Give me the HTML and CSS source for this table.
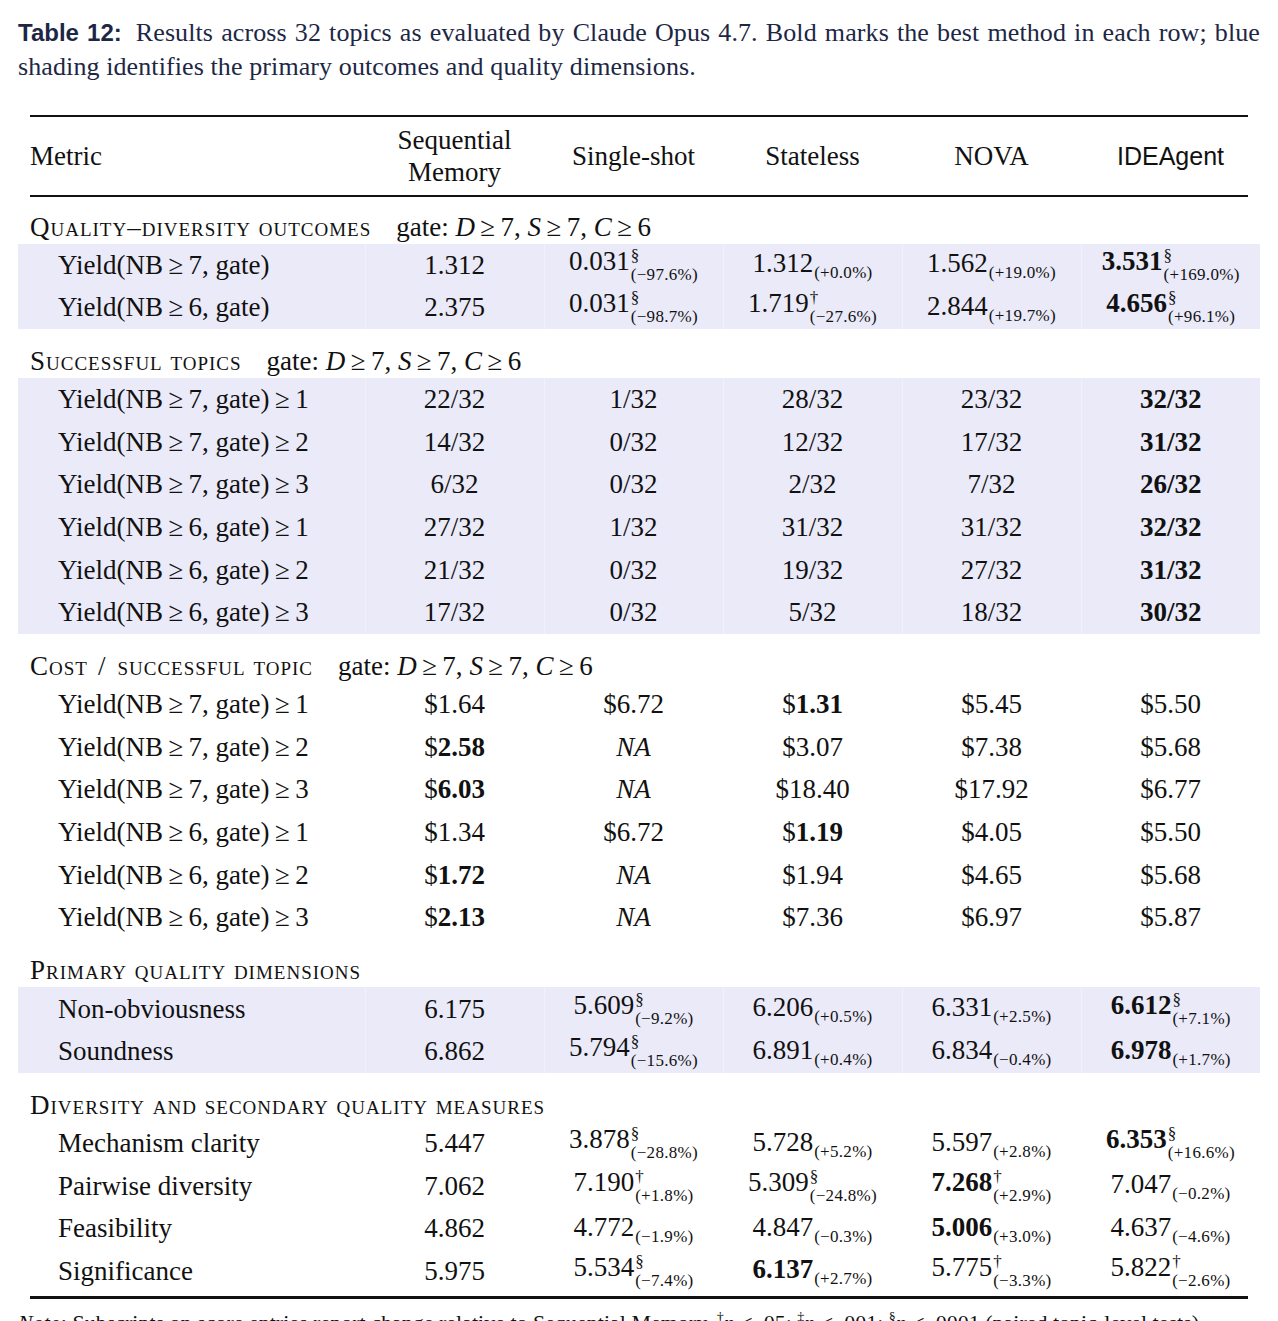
FILE: index.html
```html
<!DOCTYPE html>
<html lang="en">
<head>
  <meta charset="UTF-8" />
  <meta name="viewport" content="width=device-width, initial-scale=1.0"/>
  <title>Table 12 - Results across 32 topics</title>
  <link rel="stylesheet" href="styles.css">
</head>
<body>
  <div class="page">
    <p class="caption"><span class="cap-label">Table 12:</span> Results across 32 topics as evaluated by Claude Opus 4.7. Bold marks the best method in each row; blue shading identifies the primary outcomes and quality dimensions.</p>

    <table class="results">
      <colgroup>
        <col class="c-metric"><col><col><col><col><col>
      </colgroup>
      <thead>
        <tr class="rule"><td colspan="6"><div class="line top"></div></td></tr>
        <tr class="head">
          <th class="metric">Metric</th>
          <th>Sequential<br>Memory</th>
          <th>Single-shot</th>
          <th>Stateless</th>
          <th>NOVA</th>
          <th class="sans">IDEAgent</th>
        </tr>
        <tr class="rule"><td colspan="6"><div class="line mid"></div></td></tr>
      </thead>
      <tbody>
        <!-- quality-diversity outcomes -->
        <tr class="sec first"><td colspan="6"><span class="sc">Quality–diversity outcomes</span><span class="gate">gate: <i>D</i>&#8201;≥&#8201;7, <i>S</i>&#8201;≥&#8201;7, <i>C</i>&#8201;≥&#8201;6</span></td></tr>
        <tr class="shade">
          <td class="lbl">Yield(NB&#8201;≥&#8201;7, gate)</td>
          <td>1.312</td>
          <td>0.031<span class="ss"><span class="up">§</span><span class="dn">(−97.6%)</span></span></td>
          <td>1.312<span class="sb">(+0.0%)</span></td>
          <td>1.562<span class="sb">(+19.0%)</span></td>
          <td><b>3.531</b><span class="ss"><span class="up">§</span><span class="dn">(+169.0%)</span></span></td>
        </tr>
        <tr class="shade">
          <td class="lbl">Yield(NB&#8201;≥&#8201;6, gate)</td>
          <td>2.375</td>
          <td>0.031<span class="ss"><span class="up">§</span><span class="dn">(−98.7%)</span></span></td>
          <td>1.719<span class="ss"><span class="up">†</span><span class="dn">(−27.6%)</span></span></td>
          <td>2.844<span class="sb">(+19.7%)</span></td>
          <td><b>4.656</b><span class="ss"><span class="up">§</span><span class="dn">(+96.1%)</span></span></td>
        </tr>

        <!-- successful topics -->
        <tr class="sec"><td colspan="6"><span class="sc">Successful topics</span><span class="gate">gate: <i>D</i>&#8201;≥&#8201;7, <i>S</i>&#8201;≥&#8201;7, <i>C</i>&#8201;≥&#8201;6</span></td></tr>
        <tr class="shade">
          <td class="lbl">Yield(NB&#8201;≥&#8201;7, gate)&#8201;≥&#8201;1</td>
          <td>22/32</td><td>1/32</td><td>28/32</td><td>23/32</td><td><b>32/32</b></td>
        </tr>
        <tr class="shade">
          <td class="lbl">Yield(NB&#8201;≥&#8201;7, gate)&#8201;≥&#8201;2</td>
          <td>14/32</td><td>0/32</td><td>12/32</td><td>17/32</td><td><b>31/32</b></td>
        </tr>
        <tr class="shade">
          <td class="lbl">Yield(NB&#8201;≥&#8201;7, gate)&#8201;≥&#8201;3</td>
          <td>6/32</td><td>0/32</td><td>2/32</td><td>7/32</td><td><b>26/32</b></td>
        </tr>
        <tr class="shade">
          <td class="lbl">Yield(NB&#8201;≥&#8201;6, gate)&#8201;≥&#8201;1</td>
          <td>27/32</td><td>1/32</td><td>31/32</td><td>31/32</td><td><b>32/32</b></td>
        </tr>
        <tr class="shade">
          <td class="lbl">Yield(NB&#8201;≥&#8201;6, gate)&#8201;≥&#8201;2</td>
          <td>21/32</td><td>0/32</td><td>19/32</td><td>27/32</td><td><b>31/32</b></td>
        </tr>
        <tr class="shade">
          <td class="lbl">Yield(NB&#8201;≥&#8201;6, gate)&#8201;≥&#8201;3</td>
          <td>17/32</td><td>0/32</td><td>5/32</td><td>18/32</td><td><b>30/32</b></td>
        </tr>

        <!-- cost per successful topic -->
        <tr class="sec"><td colspan="6"><span class="sc">Cost<span class="slash">/</span>successful topic</span><span class="gate">gate: <i>D</i>&#8201;≥&#8201;7, <i>S</i>&#8201;≥&#8201;7, <i>C</i>&#8201;≥&#8201;6</span></td></tr>
        <tr>
          <td class="lbl">Yield(NB&#8201;≥&#8201;7, gate)&#8201;≥&#8201;1</td>
          <td>$1.64</td><td>$6.72</td><td>$<b>1.31</b></td><td>$5.45</td><td>$5.50</td>
        </tr>
        <tr>
          <td class="lbl">Yield(NB&#8201;≥&#8201;7, gate)&#8201;≥&#8201;2</td>
          <td>$<b>2.58</b></td><td><i>NA</i></td><td>$3.07</td><td>$7.38</td><td>$5.68</td>
        </tr>
        <tr>
          <td class="lbl">Yield(NB&#8201;≥&#8201;7, gate)&#8201;≥&#8201;3</td>
          <td>$<b>6.03</b></td><td><i>NA</i></td><td>$18.40</td><td>$17.92</td><td>$6.77</td>
        </tr>
        <tr>
          <td class="lbl">Yield(NB&#8201;≥&#8201;6, gate)&#8201;≥&#8201;1</td>
          <td>$1.34</td><td>$6.72</td><td>$<b>1.19</b></td><td>$4.05</td><td>$5.50</td>
        </tr>
        <tr>
          <td class="lbl">Yield(NB&#8201;≥&#8201;6, gate)&#8201;≥&#8201;2</td>
          <td>$<b>1.72</b></td><td><i>NA</i></td><td>$1.94</td><td>$4.65</td><td>$5.68</td>
        </tr>
        <tr>
          <td class="lbl">Yield(NB&#8201;≥&#8201;6, gate)&#8201;≥&#8201;3</td>
          <td>$<b>2.13</b></td><td><i>NA</i></td><td>$7.36</td><td>$6.97</td><td>$5.87</td>
        </tr>

        <!-- primary quality -->
        <tr class="sec"><td colspan="6"><span class="sc">Primary quality dimensions</span></td></tr>
        <tr class="shade">
          <td class="lbl">Non-obviousness</td>
          <td>6.175</td>
          <td>5.609<span class="ss"><span class="up">§</span><span class="dn">(−9.2%)</span></span></td>
          <td>6.206<span class="sb">(+0.5%)</span></td>
          <td>6.331<span class="sb">(+2.5%)</span></td>
          <td><b>6.612</b><span class="ss"><span class="up">§</span><span class="dn">(+7.1%)</span></span></td>
        </tr>
        <tr class="shade">
          <td class="lbl">Soundness</td>
          <td>6.862</td>
          <td>5.794<span class="ss"><span class="up">§</span><span class="dn">(−15.6%)</span></span></td>
          <td>6.891<span class="sb">(+0.4%)</span></td>
          <td>6.834<span class="sb">(−0.4%)</span></td>
          <td><b>6.978</b><span class="sb">(+1.7%)</span></td>
        </tr>

        <!-- diversity + secondary -->
        <tr class="sec"><td colspan="6"><span class="sc">Diversity and secondary quality measures</span></td></tr>
        <tr>
          <td class="lbl">Mechanism clarity</td>
          <td>5.447</td>
          <td>3.878<span class="ss"><span class="up">§</span><span class="dn">(−28.8%)</span></span></td>
          <td>5.728<span class="sb">(+5.2%)</span></td>
          <td>5.597<span class="sb">(+2.8%)</span></td>
          <td><b>6.353</b><span class="ss"><span class="up">§</span><span class="dn">(+16.6%)</span></span></td>
        </tr>
        <tr>
          <td class="lbl">Pairwise diversity</td>
          <td>7.062</td>
          <td>7.190<span class="ss"><span class="up">†</span><span class="dn">(+1.8%)</span></span></td>
          <td>5.309<span class="ss"><span class="up">§</span><span class="dn">(−24.8%)</span></span></td>
          <td><b>7.268</b><span class="ss"><span class="up">†</span><span class="dn">(+2.9%)</span></span></td>
          <td>7.047<span class="sb">(−0.2%)</span></td>
        </tr>
        <tr>
          <td class="lbl">Feasibility</td>
          <td>4.862</td>
          <td>4.772<span class="sb">(−1.9%)</span></td>
          <td>4.847<span class="sb">(−0.3%)</span></td>
          <td><b>5.006</b><span class="sb">(+3.0%)</span></td>
          <td>4.637<span class="sb">(−4.6%)</span></td>
        </tr>
        <tr>
          <td class="lbl">Significance</td>
          <td>5.975</td>
          <td>5.534<span class="ss"><span class="up">§</span><span class="dn">(−7.4%)</span></span></td>
          <td><b>6.137</b><span class="sb">(+2.7%)</span></td>
          <td>5.775<span class="ss"><span class="up">†</span><span class="dn">(−3.3%)</span></span></td>
          <td>5.822<span class="ss"><span class="up">†</span><span class="dn">(−2.6%)</span></span></td>
        </tr>
        <tr class="gap"><td colspan="6"></td></tr>
        <tr class="rule"><td colspan="6"><div class="line bottom"></div></td></tr>
      </tbody>
    </table>

    <p class="note"><i>Note:</i> Subscripts on score entries report change relative to Sequential Memory. <sup>†</sup><i>p</i> &lt; .05; <sup>‡</sup><i>p</i> &lt; .001; <sup>§</sup><i>p</i> &lt; .0001 (paired topic-level tests).</p>
  </div>
</body>
</html>
```

FILE: styles.css
```css
html, body {
  margin: 0;
  background: #ffffff;
}
.page {
  height: 1321px;
  overflow: hidden;
  padding: 16px 18px 0;
  box-sizing: border-box;
  font-family: "Liberation Serif", "Times New Roman", serif;
  color: #111;
}
.caption {
  margin: 0;
  font-size: 26px;
  line-height: 34px;
  letter-spacing: 0.1px;
  color: #1d2745;
  text-align: justify;
}
.cap-label {
  font-family: "Liberation Sans", Arial, sans-serif;
  font-weight: bold;
  font-size: 24px;
  letter-spacing: 0;
  margin-right: 6px;
}

.results {
  margin-top: 31px;
  width: 1242px;
  border-collapse: collapse;
  table-layout: fixed;
  font-size: 27px;
}
.results col { width: 179px; }
.results col.c-metric { width: 347px; }
.results td, .results th {
  padding: 0;
  text-align: center;
  vertical-align: middle;
  white-space: nowrap;
  font-weight: normal;
  line-height: 30px;
}

/* booktabs style rules, inset from the shaded area */
.line {
  margin: 0 12px;
  background: #111;
}
.line.top { height: 2px; }
.line.mid { height: 1.5px; }
.line.bottom { height: 2.5px; }
.gap td { height: 4px; }

.head th {
  height: 78px;
  line-height: 32px;
}
.head th.metric {
  text-align: left;
  padding-left: 12px;
}
.head th.sans {
  font-family: "Liberation Sans", Arial, sans-serif;
  font-size: 25px;
}

.sec td {
  height: 49px;
  text-align: left;
  vertical-align: bottom;
  padding: 0 0 2px 12px;
  box-sizing: border-box;
}
.sec.first td { height: 47px; }
.sc {
  font-variant: small-caps;
  letter-spacing: 1px;
}
.sc .slash {
  margin: 0 11px 0 10px;
}
.gate {
  margin-left: 25px;
}

tbody tr td.lbl {
  text-align: left;
  padding-left: 40px;
}
tbody tr:not(.sec):not(.rule):not(.gap) td {
  height: 42.65px;
}
.shade td {
  background: #eaeaf9;
}
.shade td + td {
  border-left: 1px solid #f1f1fc;
}

/* sub and superscript notes */
.sb {
  font-size: 17px;
  letter-spacing: 0.3px;
  vertical-align: -6px;
  line-height: 1;
  margin-left: 1px;
}
.ss {
  display: inline-block;
  vertical-align: -10px;
  font-size: 17px;
  line-height: 19px;
  letter-spacing: 0.3px;
  text-align: left;
  margin-left: 1px;
}
.ss .up, .ss .dn { display: block; }

.note {
  margin: 4px 0 0;
  font-size: 22px;
  line-height: 30px;
  text-align: justify;
}
.note sup {
  font-size: 14px;
}
```
